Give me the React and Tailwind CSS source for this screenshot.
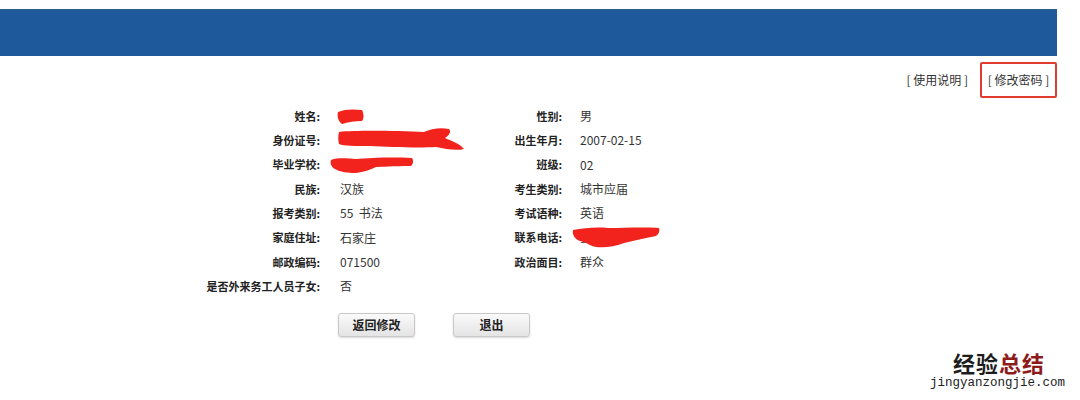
import React from 'react';

const font = { fontFamily: '"Noto Sans CJK SC", "Noto Sans", sans-serif' };

// red marker blobs painted over the private fields
function Scribble({ kind }) {
  if (kind === 'name') {
    return (
      <svg className="absolute left-[17px] top-[5px]" width="27" height="15" viewBox="0 0 27 15">
        <path d="M1 3 C7 0 17 0 25 1 C27 5 27 10 25 12 C18 12 11 13 5 15 C1 12 0 7 1 3 Z" fill="#f2231c" />
      </svg>
    );
  }
  if (kind === 'id') {
    return (
      <svg className="absolute left-[18px] top-[0px]" width="127" height="24" viewBox="0 0 127 24">
        <path d="M1 4 C20 2 60 3 86 4 C93 1 102 -1 111 1 C114 4 110 8 107 10 C114 13 122 16 126 21 C118 23 108 21 98 19 C80 20 52 19 32 18 C16 18 6 18 1 16 C0 12 0 8 1 4 Z" fill="#f2231c" />
      </svg>
    );
  }
  if (kind === 'school') {
    return (
      <svg className="absolute left-[10px] top-[4px]" width="84" height="17" viewBox="0 0 84 17">
        <path d="M1 3 C10 0 18 2 26 2 C40 1 60 0 82 1 C84 4 83 7 81 9 C62 9 52 10 46 10 C40 13 34 15 26 16 C18 16 10 15 5 12 C1 10 0 6 1 3 Z" fill="#f2231c" />
      </svg>
    );
  }
  return (
    <svg className="absolute left-[10px] top-[2px]" width="88" height="21" viewBox="0 0 88 21">
      <path d="M1 3 C12 1 24 0 36 1 C52 1 70 0 87 1 C88 4 87 7 84 9 C72 11 62 14 52 16 C42 20 32 21 24 20 C18 19 14 15 8 14 C3 12 0 8 1 3 Z" fill="#f2231c" />
    </svg>
  );
}

const rows = [
  ['姓名', 'name', '性别', '男'],
  ['身份证号', 'id', '出生年月', '2007-02-15'],
  ['毕业学校', 'school', '班级', '02'],
  ['民族', '汉族', '考生类别', '城市应届'],
  ['报考类别', '55  书法', '考试语种', '英语'],
  ['家庭住址', '石家庄', '联系电话', 'phone'],
  ['邮政编码', '071500', '政治面目', '群众'],
  ['是否外来务工人员子女', '否', null, null],
];

const hidden = ['name', 'id', 'school', 'phone'];

function Value({ v, pad }) {
  if (hidden.includes(v)) {
    return (
      <div className={'relative h-[24.3px] flex items-center text-[#555] ' + pad}>
        {v === 'phone' ? '1' : ''}
        <Scribble kind={v} />
      </div>
    );
  }
  return <div className={'h-[24.3px] flex items-center whitespace-pre ' + pad}>{v}</div>;
}

function Button({ children }) {
  return (
    <button className="w-[77px] h-[24px] rounded-[3px] border border-[#c8c8c8] bg-gradient-to-b from-[#fafafa] to-[#e4e4e4] shadow-[0_1px_2px_rgba(0,0,0,0.15)] text-[12px] font-bold text-[#222]">
      {children}
    </button>
  );
}

export default function App() {
  return (
    <div className="w-[1080px] h-[400px] bg-white text-[#333] text-[12px] overflow-hidden" style={font}>
      <div className="pt-[9px] pr-[23px]">
        <div className="h-[47px] bg-[#1e5a9b] border-t border-[#2f5f86]" />
      </div>

      <div className="flex justify-end items-center gap-[12px] pr-[23px] mt-[6px] h-[36px]">
        <span className="whitespace-pre">[ 使用说明 ]</span>
        <span className="whitespace-pre h-[36px] w-[77px] flex items-center justify-center border-2 border-[#e03a31] rounded-[2px]">[ 修改密码 ]</span>
      </div>

      <div className="grid grid-cols-[130px_170px_72px_200px] ml-[190px] mt-[6px]">
        {rows.map((r, i) => (
          <React.Fragment key={i}>
            <div className="h-[24.3px] flex items-center justify-end font-bold text-[11px] text-[#222] whitespace-nowrap">{r[0]}:</div>
            <Value v={r[1]} pad="pl-[20px]" />
            <div className="h-[24.3px] flex items-center justify-end font-bold text-[11px] text-[#222]">{r[2] ? r[2] + ':' : ''}</div>
            {r[3] ? <Value v={r[3]} pad="pl-[18px]" /> : <div />}
          </React.Fragment>
        ))}
      </div>

      <div className="flex gap-[38px] ml-[338px] mt-[15px]">
        <Button>返回修改</Button>
        <Button>退出</Button>
      </div>

      <div className="flex flex-col items-end pr-[15px] mt-[14px]">
        <div className="text-[22px] font-bold leading-[22px] tracking-[1px] pr-[20px]">
          <span className="text-[#1d1d1d]">经验</span>
          <span className="text-[#8e1b1b]">总结</span>
        </div>
        <div className="text-[12.5px] leading-[14px] mt-[3px] text-[#222]" style={{ fontFamily: '"Liberation Mono", monospace' }}>
          jingyanzongjie.com
        </div>
      </div>
    </div>
  );
}
